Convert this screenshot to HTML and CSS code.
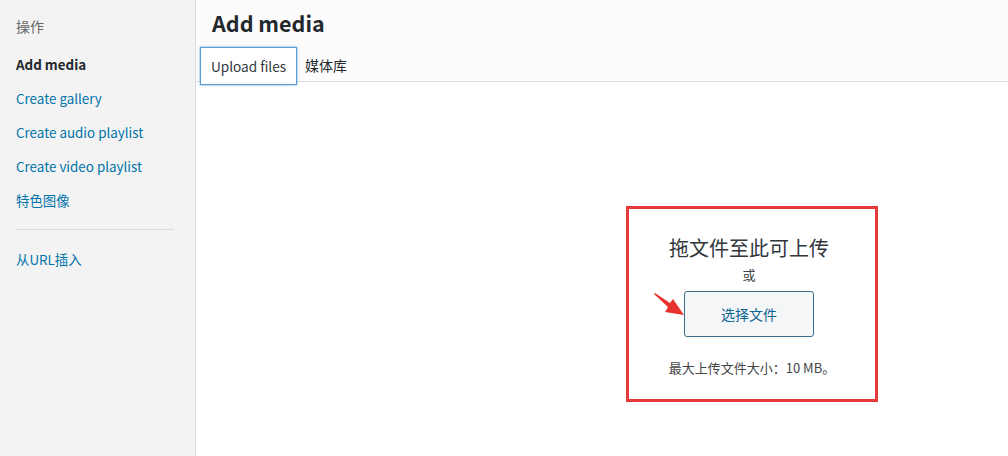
FILE: index.html
```html
<!DOCTYPE html>
<html lang="zh">
<head>
<meta charset="utf-8">
<title>Add media</title>
<link rel="stylesheet" href="styles.css">
</head>
<body>
<div class="frame">
  <aside class="sidebar">
    <div class="menu-heading">操作</div>
    <div class="menu-item current">Add media</div>
    <div class="menu-item">Create gallery</div>
    <div class="menu-item">Create audio playlist</div>
    <div class="menu-item">Create video playlist</div>
    <div class="menu-item">特色图像</div>
    <div class="separator"></div>
    <div class="menu-item">从URL插入</div>
  </aside>
  <main class="main">
    <header class="header">
      <h1 class="title">Add media</h1>
      <nav class="tabs">
        <span class="tab active">Upload files</span>
        <span class="tab">媒体库</span>
      </nav>
    </header>
    <section class="content">
      <div class="uploader">
        <svg class="arrow" width="34" height="26" viewBox="0 0 34 26">
          <polygon points="1,1 16,11 19,7 30,23 11,20 14,15 0,2" fill="#e8322f"/>
        </svg>
        <div class="drop-title">拖文件至此可上传</div>
        <div class="or">或</div>
        <div class="select-btn">选择文件</div>
        <div class="max-size">最大上传文件大小：10 MB。</div>
      </div>
    </section>
  </main>
</div>
</body>
</html>
```

FILE: styles.css
```css
* { box-sizing: border-box; }
html, body {
  margin: 0;
  padding: 0;
  width: 1008px;
  height: 456px;
  overflow: hidden;
  background: #fff;
  font-family: "Noto Sans CJK SC", "Noto Sans", sans-serif;
  color: #23282d;
}
.frame {
  display: flex;
  height: 456px;
}
.sidebar {
  width: 196px;
  flex: none;
  background: #f3f3f3;
  border-right: 1px solid #dddddd;
  padding: 15px 0 0 16px;
}
.menu-heading {
  font-size: 14px;
  line-height: 22px;
  color: #666;
  height: 22px;
  margin-bottom: 16px;
}
.menu-item {
  font-size: 13.4px;
  line-height: 22px;
  height: 34px;
  color: #0073aa;
}
.menu-item.current {
  color: #23282d;
  font-weight: 600;
}
.separator {
  width: 158px;
  height: 1px;
  background: #dcdcdc;
  margin: 6px 0 18px;
}
.main {
  flex: 1;
  display: flex;
  flex-direction: column;
}
.header {
  height: 82px;
  background: #fcfcfc;
  border-bottom: 1px solid #dddddd;
}
.title {
  margin: 0;
  padding: 8px 0 0 16px;
  font-size: 21.5px;
  line-height: 30px;
  font-weight: 600;
  color: #23282d;
  height: 44px;
}
.tabs {
  display: flex;
  align-items: center;
  padding-left: 4px;
  height: 39px;
  margin-top: 1px;
}
.tab {
  font-size: 14px;
  line-height: 20px;
  color: #23282d;
  padding: 0 8px;
}
.tab.active {
  height: 38px;
  width: 97px;
  display: flex;
  align-items: center;
  justify-content: center;
  padding: 0;
  font-size: 13.6px;
  color: #32373c;
  background: #fff;
  border: 1px solid #5b9dd9;
  box-shadow: 0 0 2px rgba(30, 140, 190, 0.8);
  position: relative;
  top: 1px;
}
.content {
  flex: 1;
  padding: 124px 0 0 430px;
}
.uploader {
  position: relative;
  width: 252px;
  height: 196px;
  border: 3px solid #e6393b;
  display: flex;
  flex-direction: column;
  align-items: center;
  padding-top: 26px;
}
.drop-title {
  font-size: 20px;
  line-height: 26px;
  color: #32373c;
  margin-right: 6px;
}
.or {
  font-size: 13px;
  line-height: 18px;
  margin-top: 5px;
  margin-right: 6px;
  color: #444;
}
.select-btn {
  margin-top: 7px;
  margin-right: 6px;
  width: 130px;
  height: 46px;
  background: #f5f6f7;
  border: 1px solid #3c6d88;
  border-radius: 3px;
  display: flex;
  align-items: center;
  justify-content: center;
  font-size: 14px;
  color: #0a6491;
}
.max-size {
  margin-top: 22px;
  font-size: 13px;
  line-height: 18px;
  color: #444;
}
.arrow {
  position: absolute;
  left: 25px;
  top: 83px;
}
```
